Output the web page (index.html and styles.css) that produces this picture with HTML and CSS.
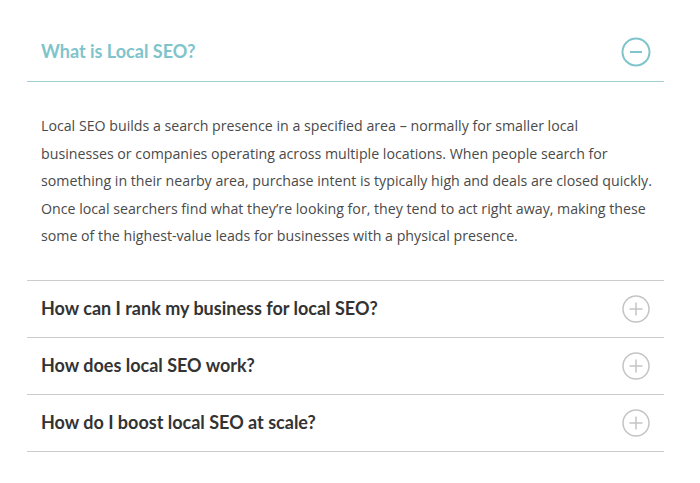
FILE: index.html
```html
<!DOCTYPE html>
<html>
<head>
<meta charset="utf-8">
<link rel="stylesheet" href="styles.css">
</head>
<body>
<div class="faq">
  <div class="item open">
    <div class="head">
      <h3 class="title">What is Local SEO?</h3>
      <svg class="icon" width="30" height="30" viewBox="0 0 30 30"><circle cx="15" cy="15" r="13.5" fill="none" stroke="currentColor" stroke-width="2"/><line x1="9" y1="15" x2="21" y2="15" stroke="currentColor" stroke-width="2"/></svg>
    </div>
    <div class="body">
      <p>Local SEO builds a search presence in a specified area – normally for smaller local<br>businesses or companies operating across multiple locations. When people search for<br>something in their nearby area, purchase intent is typically high and deals are closed quickly.<br>Once local searchers find what they’re looking for, they tend to act right away, making these<br>some of the highest-value leads for businesses with a physical presence.</p>
    </div>
  </div>
  <div class="item">
    <div class="head">
      <h3 class="title">How can I rank my business for local SEO?</h3>
      <svg class="icon" width="30" height="30" viewBox="0 0 30 30"><circle cx="15" cy="15" r="13" fill="none" stroke="currentColor" stroke-width="1.5"/><line x1="8.5" y1="15" x2="21.5" y2="15" stroke="currentColor" stroke-width="1.5"/><line x1="15" y1="8.5" x2="15" y2="21.5" stroke="currentColor" stroke-width="1.5"/></svg>
    </div>
  </div>
  <div class="item">
    <div class="head">
      <h3 class="title">How does local SEO work?</h3>
      <svg class="icon" width="30" height="30" viewBox="0 0 30 30"><circle cx="15" cy="15" r="13" fill="none" stroke="currentColor" stroke-width="1.5"/><line x1="8.5" y1="15" x2="21.5" y2="15" stroke="currentColor" stroke-width="1.5"/><line x1="15" y1="8.5" x2="15" y2="21.5" stroke="currentColor" stroke-width="1.5"/></svg>
    </div>
  </div>
  <div class="item">
    <div class="head">
      <h3 class="title">How do I boost local SEO at scale?</h3>
      <svg class="icon" width="30" height="30" viewBox="0 0 30 30"><circle cx="15" cy="15" r="13" fill="none" stroke="currentColor" stroke-width="1.5"/><line x1="8.5" y1="15" x2="21.5" y2="15" stroke="currentColor" stroke-width="1.5"/><line x1="15" y1="8.5" x2="15" y2="21.5" stroke="currentColor" stroke-width="1.5"/></svg>
    </div>
  </div>
</div>
</body>
</html>
```
FILE: styles.css
```css
html, body {
  margin: 0;
  padding: 0;
  background: #fff;
}
.faq {
  margin: 0 36px 0 27px;
  padding-top: 22px;
}
.item {
  border-bottom: 1px solid #cccccc;
}
.item.open .head {
  border-bottom: 1px solid #9fcfd4;
}
.head {
  display: flex;
  align-items: center;
  justify-content: space-between;
  height: 59px;
  padding: 0 13px 0 14px;
}
.item + .item .head {
  height: 56px;
  box-sizing: border-box;
}
.title {
  margin: 0 0 2px;
  font-family: "Lato", "Noto Sans", sans-serif;
  font-weight: 700;
  font-size: 18px;
  color: #333333;
}
.open .title {
  color: #80c4cb;
}
.icon {
  color: #c4c4c4;
  flex: none;
}
.open .icon {
  color: #80c4cb;
}
.body {
  padding: 30px 0 30px 14px;
}
.body p {
  margin: 0;
  font-family: "Open Sans", "Noto Sans", sans-serif;
  font-size: 14.2px;
  line-height: 27.5px;
  color: #4a4a4a;
  white-space: nowrap;
}
```
